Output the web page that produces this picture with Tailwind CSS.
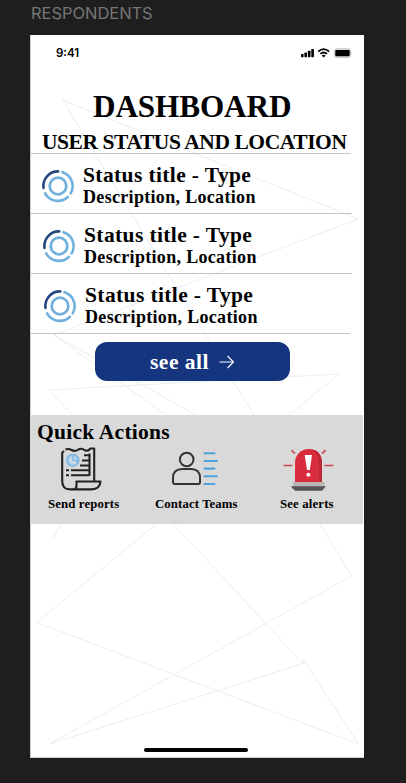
<!DOCTYPE html>
<html lang="en">
<head>
<meta charset="utf-8">
<title>Respondents dashboard</title>
<script src="https://cdn.jsdelivr.net/npm/@tailwindcss/browser@4"></script>
</head>
<body class="w-[406px] h-[783px] overflow-hidden bg-[#1e1e1e] pl-[30px]">
<div class="h-[35px] pt-[2px] pl-px font-[Inter,sans-serif] text-[16.5px] leading-[22px] text-[#757575] tracking-[-0.05px]">RESPONDENTS</div>
<main class="relative isolate flex flex-col w-[334px] h-[723px] bg-white border-l border-b border-[#d0d0d0] text-black font-bold font-['Liberation_Serif',serif] whitespace-nowrap">
  <!-- decorative backdrop -->
  <svg class="absolute top-0 -left-px -z-10" width="334" height="723" viewBox="30 35 334 723" fill="none" stroke="#ececf5" stroke-width="1">
    <path d="M166 415 54 335 358 219 62.500 100 351.500 576 49.500 744 303 663.500 49 390 339 374 36.500 622.500 358.500 744 303 659V664M54 335 196 415M61 524 53 539"/>
  </svg>

  <div class="flex h-[35px] pl-[25px] pr-[11px] pt-[10px] justify-between">
    <span class="font-[Inter,sans-serif] font-semibold text-[11.5px] leading-4">9:41</span>
    <svg width="53" height="16" viewBox="300 45 53 16">
      <g><rect x="301" y="54" width="2.600" height="3.200" rx=".6"/><rect x="304.400" y="52.500" width="2.600" height="4.700" rx=".6"/><rect x="307.900" y="50.700" width="2.600" height="6.500" rx=".6"/><rect x="311.300" y="49" width="2.600" height="8.200" rx=".6"/></g>
      <g fill="none" stroke="#000" stroke-width="1.700"><path d="M318.200 51.600Q323.700 46.800 329.200 51.600M320.400 53.900Q323.700 51.100 327 53.900"/></g>
      <path d="M321.800 55.500Q323.700 54.100 325.600 55.500L323.700 57.500Z"/>
      <rect x="334.300" y="48.700" width="16.400" height="8.800" rx="2.400" fill="#ddd" stroke="#c8c8c8"/>
      <rect x="335.300" y="50" width="14.400" height="6.200" rx="1"/><path d="M351.300 51.500Q353 53 351.300 54.500Z" fill="#bbb"/>
    </svg>
  </div>

  <h1 class="mt-[19px] h-9 pl-[62px] text-[31.200px] leading-9 tracking-[-0.1px]">DASHBOARD</h1>
  <h2 class="mt-[5px] h-6 pl-[11px] text-[21.500px] leading-6 tracking-[-0.43px]">USER STATUS AND LOCATION</h2>

  <svg class="hidden">
    <symbol id="ring" viewBox="0 0 34 34">
      <g fill="none" stroke="#6fb0dd" stroke-width="2.600" stroke-linecap="round"><circle cx="17" cy="17" r="8.300" stroke-width="2.800"/><path d="M21.500 3.200A14.600 14.600 0 0 1 29.700 24.300M26.800 28A14.600 14.600 0 0 1 4.100 24.300"/><path stroke="#24487f" d="M2.500 19A14.600 14.600 0 0 1 17.200 2.400"/></g>
    </symbol>
  </svg>
  <ul class="-mt-px">
    <li class="w-[321px] h-[60px] -ml-px border-t border-[#c4c4c4] flex pl-[11px] pt-[9px] gap-[8px]">
      <svg class="mt-[6px] shrink-0" width="34" height="34"><use href="#ring"/></svg>
      <div><p class="text-[21.500px] leading-[24px] tracking-[0.38px]">Status title - Type</p><p class="text-[18px] leading-[20px] tracking-[0.32px]">Description, Location</p></div>
    </li>
    <li class="w-[322px] h-[60px] -ml-px border-t border-[#c4c4c4] flex pl-[12px] pt-[9px] gap-[8px]">
      <svg class="mt-[6px] shrink-0" width="34" height="34"><use href="#ring"/></svg>
      <div><p class="text-[21.500px] leading-[24px] tracking-[0.38px]">Status title - Type</p><p class="text-[18px] leading-[20px] tracking-[0.32px]">Description, Location</p></div>
    </li>
    <li class="w-[322px] h-[60px] -ml-px border-t border-[#c4c4c4] flex pl-[13px] pt-[9px] gap-[8px]">
      <svg class="mt-[6px] shrink-0" width="34" height="34"><use href="#ring"/></svg>
      <div><p class="text-[21.500px] leading-[24px] tracking-[0.38px]">Status title - Type</p><p class="text-[18px] leading-[20px] tracking-[0.32px]">Description, Location</p></div>
    </li>
  </ul>
  <div class="w-[319px] h-px bg-[#c4c4c4]"></div>

  <button class="mt-[8px] ml-[64px] w-[195px] h-[39px] shrink-0 rounded-[12px] bg-[#15357f] text-white flex items-center pl-[55px] gap-[10px] text-[21.500px] tracking-[0.5px] leading-6">
    <span>see all</span>
    <svg width="16" height="16" viewBox="0 0 16 16" fill="none" stroke="#fff" stroke-width="1.100"><path d="M.5 8H14.500M8.500 2 14.500 8 8.500 14"/></svg>
  </button>

  <section class="mt-[34px] -ml-px w-[333px] h-[109px] shrink-0 bg-[#d9d9d9]">
    <h3 class="pl-[7px] pt-[5px] text-[21.500px] leading-6 tracking-[0.25px]">Quick Actions</h3>
    <div class="mt-px flex text-[12.800px] leading-4">
      <div class="w-[108px] pl-[18px]">
        <svg class="ml-[12px]" width="42" height="51" viewBox="60 445 42 51" fill="none" stroke="#222" stroke-width="2.100" stroke-linejoin="round">
          <path d="M64 451 62.200 452.800V481Q62.200 489.400 70 489.400H91.500Q100 489 100.500 481.500H76.500V486.500Q76 489 73.500 489.400M94.200 481.500V448.500H90.500Q88 451.700 85 450.300Q81.500 447.800 78.500 449.500Q75 452 71.500 450Q68.500 448.300 65.500 449.500"/>
          <path d="M89.500 453.500V476M84 455.200H89M82 460.500H89M80 465.500H89M71 470.300H89M71 475.200H89M66 470.300H69M66 475.200H69"/>
          <circle cx="72.800" cy="460.300" r="5.600" fill="#c5d9e8" stroke="#83bbe3" stroke-width="2.400"/><path d="M73 455V460.500H78.500" stroke="#83bbe3" stroke-width="1.600"/>
        </svg>
        <p class="tracking-[0.12px]">Send reports</p>
      </div>
      <div class="w-[124px] pl-[17px]">
        <svg class="ml-[15px]" width="52" height="51" viewBox="170 445 52 51" fill="none">
          <g stroke="#333" stroke-width="2"><circle cx="186.700" cy="459.500" r="6.800"/><path d="M175 484H198.500Q200 484 200 482V478Q200 469 191 469H182.500Q173 469 173 478V482Q173 484 175 484Z"/></g>
          <path d="M204.500 453.200H214.500M204.500 461H217M204.500 468.600H214.500M204.500 476.300H217M204.500 484H214.500" stroke="#50a2dd" stroke-width="2.100" stroke-linecap="round"/>
        </svg>
        <p class="tracking-[0.1px]">Contact Teams</p>
      </div>
      <div class="pl-[18px]">
        <svg class="ml-[2px]" width="52" height="51" viewBox="282 445 52 51" fill="none">
          <path d="M283.500 465.500H292.500M324.500 465.500H333.500M291.500 450.200 294.900 453.600M325.500 450.200 322.100 453.600" stroke="#c94753" stroke-width="1.700"/>
          <path d="M295 482.500V462.500A13.500 13.500 0 0 1 322 462.500V482.500Z" fill="#d92d3e"/>
          <path d="M310 449.100Q319 453 319 462.500V482.500H322V462.500Q321.500 450 310 449.100Z" fill="#bd2637"/>
          <path d="M304.700 455H312L309.800 470H307Z" fill="#fff"/><circle cx="308.400" cy="474.700" r="2" fill="#fff"/>
          <path d="M293 482H324.500V487H293Z" fill="#b8b5b4"/><path d="M290.700 486.300H326L322 490.800H295Z" fill="#555"/>
        </svg>
        <p class="tracking-[0.15px]">See alerts</p>
      </div>
    </div>
  </section>
  <div class="mt-auto mb-[5px] ml-[113px] w-[104px] h-1 rounded-full bg-black"></div>
</main>
</body>
</html>
